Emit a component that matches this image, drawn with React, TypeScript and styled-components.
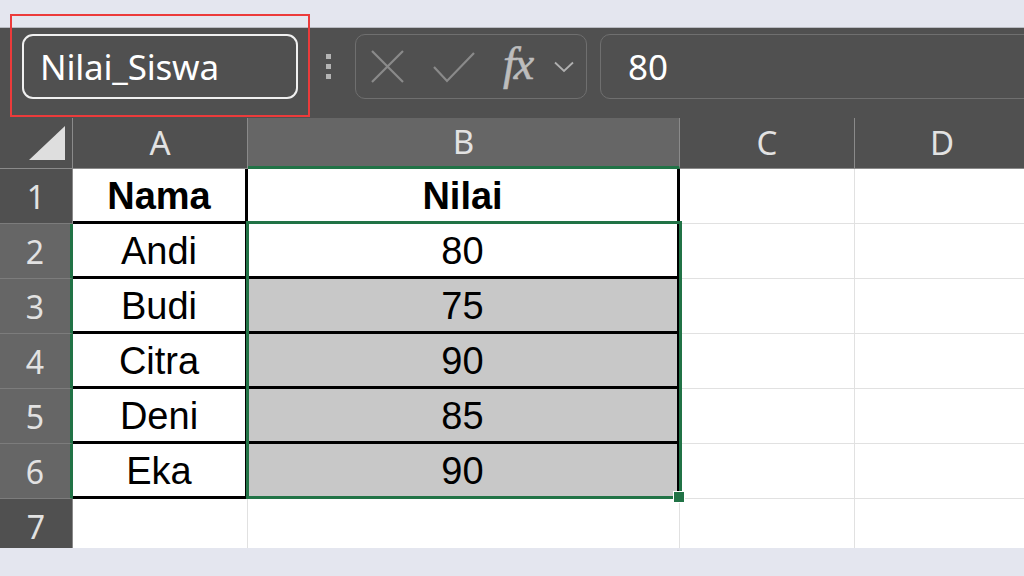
import React from "react";
import styled, { createGlobalStyle } from "styled-components";

const GREEN = "#217346";
const UI_FONT = `"Noto Sans", "Open Sans", sans-serif`;
const CELL_FONT = `"Liberation Sans", Arial, sans-serif`;

const GlobalStyle = createGlobalStyle`
  html, body {
    margin: 0;
    padding: 0;
    background: #e4e6ef;
  }
  * {
    box-sizing: border-box;
  }
`;

type Row = { n: number; a?: string; b?: string; head?: boolean };

const ROWS: Row[] = [
  { n: 1, a: "Nama", b: "Nilai", head: true },
  { n: 2, a: "Andi", b: "80" },
  { n: 3, a: "Budi", b: "75" },
  { n: 4, a: "Citra", b: "90" },
  { n: 5, a: "Deni", b: "85" },
  { n: 6, a: "Eka", b: "90" },
  { n: 7 },
];

const COLUMNS = ["A", "B", "C", "D"];

const App: React.FC = () => {
  return (
    <>
      <GlobalStyle />
      <Page>
        <TopStrip />
        <Toolbar>
          <NameBox>Nilai_Siswa</NameBox>
          <Dots>
            <i />
            <i />
            <i />
          </Dots>
          <FormulaGroup>
            <svg width="35" height="35" viewBox="0 0 35 35">
              <path d="M2 2 L33 33 M33 2 L2 33" stroke="#8a8a8a" strokeWidth="2.2" fill="none" />
            </svg>
            <svg width="44" height="34" viewBox="0 0 44 34">
              <path d="M2 17 L15 31 L42 3" stroke="#8a8a8a" strokeWidth="2.2" fill="none" />
            </svg>
            <Fx>fx</Fx>
            <svg width="20" height="12" viewBox="0 0 20 12">
              <path d="M1 1.5 L10 10 L19 1.5" stroke="#b0b0b0" strokeWidth="1.8" fill="none" />
            </svg>
          </FormulaGroup>
          <FormulaInput>80</FormulaInput>
        </Toolbar>

        <Sheet>
          <Corner>
            <svg width="36" height="34" viewBox="0 0 36 34">
              <polygon points="0,34 36,34 36,0" fill="#dedede" />
            </svg>
          </Corner>
          {COLUMNS.map((c) => (
            <ColHead key={c} $sel={c === "B"}>
              {c}
            </ColHead>
          ))}

          {ROWS.map((r) => {
            const inTable = r.a !== undefined;
            const sel = r.n >= 2 && r.n <= 6;
            return (
              <React.Fragment key={r.n}>
                <RowHead $sel={sel}>{r.n}</RowHead>
                <Cell $table={inTable} $bold={r.head}>
                  {r.a}
                </Cell>
                <Cell $table={inTable} $bold={r.head} $fill={r.n >= 3 && r.n <= 6}>
                  {r.b}
                </Cell>
                <Cell />
                <Cell />
              </React.Fragment>
            );
          })}

          <Selection />
          <FillHandle />
        </Sheet>

        <Annotation />
      </Page>
    </>
  );
};

export default App;

const Page = styled.div`
  position: relative;
  width: 1024px;
  height: 576px;
  overflow: hidden;
  background: #e4e6ef;
  display: flex;
  flex-direction: column;
`;

const TopStrip = styled.div`
  height: 28px;
  flex-shrink: 0;
  background: #e4e6ef;
  border-bottom: 1px solid #b9bbc2;
`;

const Toolbar = styled.div`
  height: 90px;
  flex-shrink: 0;
  background: #505050;
  display: flex;
  align-items: flex-start;
  padding: 6px 0 0 22px;
  font-family: ${UI_FONT};
`;

const NameBox = styled.div`
  width: 276px;
  height: 65px;
  border: 2.5px solid #f0f0f0;
  border-radius: 11px;
  display: flex;
  align-items: center;
  padding-left: 16px;
  color: #ffffff;
  font-size: 35px;
  letter-spacing: -0.2px;
`;

const Dots = styled.div`
  margin-left: 28px;
  height: 65px;
  display: flex;
  flex-direction: column;
  justify-content: center;
  gap: 5px;
  i {
    display: block;
    width: 5px;
    height: 5px;
    background: #b4b4b4;
  }
`;

const FormulaGroup = styled.div`
  margin-left: 24px;
  width: 232px;
  height: 65px;
  border: 1.5px solid #6f6f6f;
  border-radius: 10px;
  display: flex;
  align-items: center;
  padding-left: 14px;
  gap: 27px;
  svg:last-child {
    margin-left: -12px;
  }
`;

const Fx = styled.span`
  font-family: "Liberation Serif", "Times New Roman", serif;
  font-style: italic;
  font-size: 46px;
  color: #bdbdbd;
  width: 36px;
  line-height: 1;
  margin-top: -6px;
  letter-spacing: -2px;
  -webkit-text-stroke: 0.6px #bdbdbd;
`;

const FormulaInput = styled.div`
  margin-left: 13px;
  flex: 1;
  height: 65px;
  margin-right: -12px;
  border: 1.5px solid #6f6f6f;
  border-radius: 10px;
  display: flex;
  align-items: center;
  padding-left: 27px;
  color: #ffffff;
  font-size: 35px;
`;

const Sheet = styled.div`
  position: relative;
  height: 430px;
  flex-shrink: 0;
  background: #ffffff;
  display: grid;
  grid-template-columns: 73px 175px 432px 175px 175px;
  grid-template-rows: 51px repeat(7, 55px);
  overflow: hidden;
`;

const Corner = styled.div`
  background: #505050;
  border-right: 1px solid #8a8a8a;
  border-bottom: 1px solid #8a8a8a;
  display: flex;
  align-items: flex-end;
  justify-content: flex-end;
  padding: 0 7px 8px 0;
`;

const ColHead = styled.div<{ $sel?: boolean }>`
  background: ${(p) => (p.$sel ? "#666666" : "#505050")};
  border-right: 1px solid #8a8a8a;
  border-bottom: ${(p) => (p.$sel ? `3px solid ${GREEN}` : "1px solid #8a8a8a")};
  display: flex;
  align-items: center;
  justify-content: center;
  color: #e2e2e2;
  font-family: ${UI_FONT};
  font-size: 33px;
  padding-bottom: 2px;
`;

const RowHead = styled.div<{ $sel?: boolean }>`
  background: ${(p) => (p.$sel ? "#666666" : "#505050")};
  border-right: ${(p) => (p.$sel ? `3px solid ${GREEN}` : "1px solid #8a8a8a")};
  border-bottom: 1px solid #7c7c7c;
  display: flex;
  align-items: center;
  justify-content: center;
  color: #e2e2e2;
  font-family: ${UI_FONT};
  font-size: 32px;
`;

const Cell = styled.div<{ $table?: boolean; $bold?: boolean; $fill?: boolean }>`
  background: ${(p) => (p.$fill ? "#c8c8c8" : "#ffffff")};
  border-right: ${(p) => (p.$table ? "3px solid #000000" : "1.5px solid #e1e1e1")};
  border-bottom: ${(p) => (p.$table ? "3px solid #000000" : "1.5px solid #e1e1e1")};
  display: flex;
  align-items: center;
  justify-content: center;
  color: #000000;
  font-family: ${CELL_FONT};
  font-size: 38px;
  font-weight: ${(p) => (p.$bold ? 700 : 400)};
  padding-top: 3px;
`;

const Selection = styled.div`
  position: absolute;
  left: 246px;
  top: 103px;
  width: 436px;
  height: 278px;
  border: 3px solid ${GREEN};
  pointer-events: none;
`;

const FillHandle = styled.div`
  position: absolute;
  left: 673px;
  top: 373px;
  width: 12px;
  height: 12px;
  background: ${GREEN};
  border: 1px solid #ffffff;
`;

const Annotation = styled.div`
  position: absolute;
  left: 10px;
  top: 14px;
  width: 300px;
  height: 103px;
  border: 2px solid #ec3b3b;
  pointer-events: none;
`;
